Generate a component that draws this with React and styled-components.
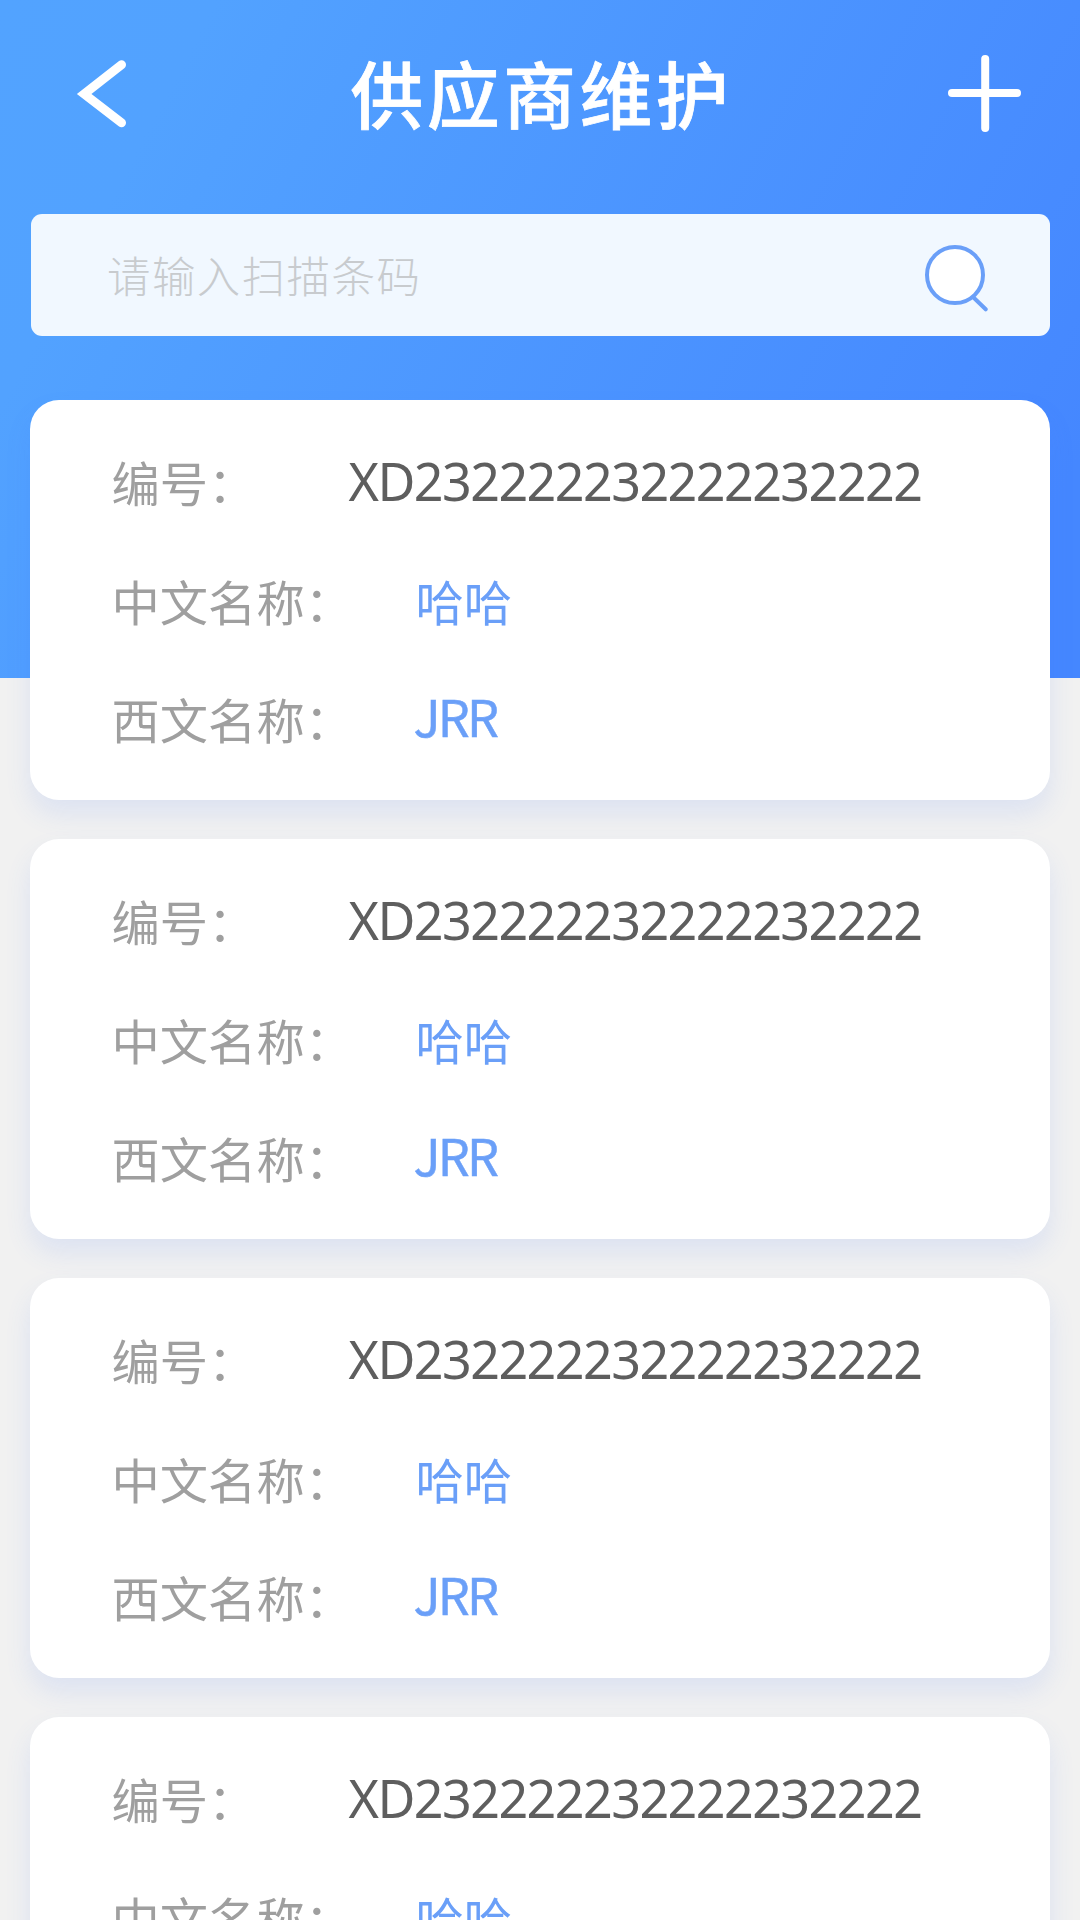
import React from "react";
import styled, { createGlobalStyle } from "styled-components";

const GlobalStyle = createGlobalStyle`
  * { box-sizing: border-box; }
  html, body { margin: 0; padding: 0; }
  body {
    background: #f1f1f1;
    font-family: "Noto Sans", "Noto Sans CJK SC", sans-serif;
  }
`;

const Screen = styled.main`
  width: 1080px;
  height: 1920px;
  overflow: hidden;
  background: linear-gradient(118deg, #52a3ff 0%, #52a2ff 15%, #4587ff 92%, #4587ff 100%) 0 0 / 100% 678px no-repeat #f1f1f1;
`;

const TopBar = styled.header`
  display: flex;
  align-items: center;
  justify-content: space-between;
  height: 187px;
  padding: 0 58px 0 76px;
`;

const IconButton = styled.button`
  display: flex;
  padding: 0;
  border: 0;
  background: none;
`;

const Title = styled.h1`
  margin: 0 0 3px 8px;
  font-family: "Noto Sans CJK SC", sans-serif;
  font-size: 72.5px;
  font-weight: 500;
  line-height: 100px;
  letter-spacing: 3.9px;
  color: #fff;
  -webkit-text-stroke: 0.8px #fff;
`;

const SearchBox = styled.div`
  display: flex;
  align-items: center;
  justify-content: space-between;
  height: 122px;
  margin: 27px 30.5px 64px;
  padding: 0 60.5px 0 76.5px;
  border-radius: 11px;
  background: #f1f8ff;
`;

const Placeholder = styled.span`
  font-family: "Noto Sans CJK SC", sans-serif;
  font-size: 43.5px;
  font-weight: 300;
  line-height: 60px;
  letter-spacing: 1.4px;
  color: #c8cbce;
`;

const CardList = styled.section`
  display: flex;
  flex-direction: column;
  gap: 39px;
  padding: 0 30px;
`;

const Card = styled.article`
  flex: none;
  height: 400px;
  padding-top: 22px;
  border-radius: 29px;
  background: #fff;
  box-shadow: 0 14px 26px rgba(75, 125, 250, 0.12);
`;

const Row = styled.div`
  display: grid;
  grid-template-columns: ${({ $label }) => $label}px 1fr;
  align-items: center;
  height: 118.4px;
  padding-left: 81.5px;
`;

const Label = styled.span`
  font-family: "Noto Sans CJK SC", sans-serif;
  font-size: 48.3px;
  line-height: 70px;
  white-space: nowrap;
  color: #9f9f9f;
`;

const Value = styled.span`
  font-size: 52px;
  line-height: 70px;
  letter-spacing: -1.55px;
  color: #5e5e5e;
`;

const LinkValue = styled(Value)`
  font-family: "Noto Sans CJK SC", sans-serif;
  font-size: 48.3px;
  letter-spacing: 0;
  color: #6a9ff8;
`;

const LatinLinkValue = styled(LinkValue)`
  margin: 0 0 5px -2px;
  font-size: 50.5px;
  letter-spacing: -2.8px;
  -webkit-text-stroke: 0.5px #6a9ff8;
`;

const suppliers = [1, 2, 3, 4].map((id) => ({
  id,
  code: "XD232222232222232222",
  chinese: "哈哈",
  western: "JRR",
}));

const BackIcon = () => (
  <svg width="51" height="68" viewBox="0 0 51 68" fill="none">
    <path d="M45.5 4.7 8.200 34l37.300 28.8" stroke="#fff" strokeWidth="9" strokeLinecap="round" strokeLinejoin="miter" />
  </svg>
);

const PlusIcon = () => (
  <svg width="74" height="77" viewBox="0 0 74 77">
    <rect x="33.2" y="0" width="8" height="77" rx="4" fill="#fff" />
    <rect x="0" y="34" width="73" height="8" rx="4" fill="#fff" />
  </svg>
);

const SearchIcon = () => (
  <svg width="65" height="74" viewBox="0 0 65 74" fill="none" stroke="#6a9ff8" strokeWidth="4">
    <path d="M49 59 61.700 71.300" strokeLinecap="round" />
    <circle cx="31" cy="37" r="28" fill="#fff" />
  </svg>
);

export default function App() {
  return (
    <>
      <GlobalStyle />
      <Screen>
        <TopBar>
          <IconButton aria-label="返回"><BackIcon /></IconButton>
          <Title>供应商维护</Title>
          <IconButton aria-label="新增"><PlusIcon /></IconButton>
        </TopBar>
        <SearchBox>
          <Placeholder>请输入扫描条码</Placeholder>
          <IconButton aria-label="搜索"><SearchIcon /></IconButton>
        </SearchBox>
        <CardList>
          {suppliers.map((s) => (
            <Card key={s.id}>
              <Row $label={237}>
                <Label>编号：</Label>
                <Value>{s.code}</Value>
              </Row>
              <Row $label={304}>
                <Label>中文名称：</Label>
                <LinkValue>{s.chinese}</LinkValue>
              </Row>
              <Row $label={304}>
                <Label>西文名称：</Label>
                <LatinLinkValue>{s.western}</LatinLinkValue>
              </Row>
            </Card>
          ))}
        </CardList>
      </Screen>
    </>
  );
}
